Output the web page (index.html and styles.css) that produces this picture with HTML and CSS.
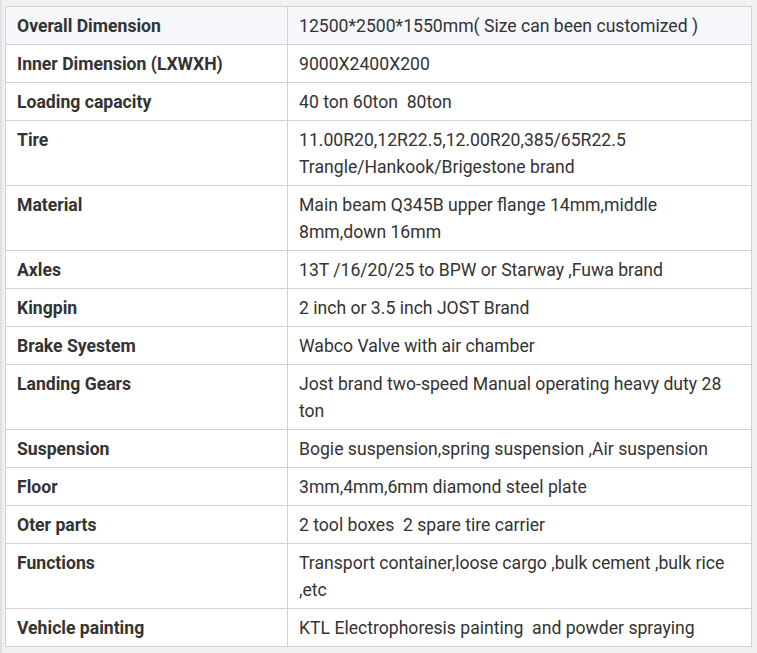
FILE: index.html
```html
<!DOCTYPE html>
<html>
<head>
<meta charset="utf-8">
<link rel="stylesheet" href="styles.css">
</head>
<body>
<div class="wrap">
<table class="spec">
<tbody>
<tr class="first"><td class="k">Overall Dimension</td><td class="v">12500*2500*1550mm( Size can been customized )</td></tr>
<tr><td class="k">Inner Dimension (LXWXH)</td><td class="v">9000X2400X200</td></tr>
<tr><td class="k">Loading capacity</td><td class="v">40 ton 60ton&nbsp; 80ton</td></tr>
<tr><td class="k">Tire</td><td class="v">11.00R20,12R22.5,12.00R20,385/65R22.5<br>Trangle/Hankook/Brigestone brand</td></tr>
<tr><td class="k">Material</td><td class="v">Main beam Q345B upper flange 14mm,middle 8mm,down 16mm</td></tr>
<tr><td class="k">Axles</td><td class="v">13T /16/20/25 to BPW or Starway ,Fuwa brand</td></tr>
<tr><td class="k">Kingpin</td><td class="v">2 inch or 3.5 inch JOST Brand</td></tr>
<tr><td class="k">Brake Syestem</td><td class="v">Wabco Valve with air chamber</td></tr>
<tr><td class="k">Landing Gears</td><td class="v">Jost brand two-speed Manual operating heavy duty 28 ton</td></tr>
<tr><td class="k">Suspension</td><td class="v">Bogie suspension,spring suspension ,Air suspension</td></tr>
<tr><td class="k">Floor</td><td class="v">3mm,4mm,6mm diamond steel plate</td></tr>
<tr><td class="k">Oter parts</td><td class="v">2 tool boxes&nbsp; 2 spare tire carrier</td></tr>
<tr><td class="k">Functions</td><td class="v">Transport container,loose cargo ,bulk cement ,bulk rice ,etc</td></tr>
<tr><td class="k">Vehicle painting</td><td class="v">KTL Electrophoresis painting&nbsp; and powder spraying</td></tr>
</tbody>
</table>
</div>
</body>
</html>
```
FILE: styles.css
```css
html, body {
  margin: 0;
  padding: 0;
  background: #f1f1f2;
}
body {
  font-family: Roboto, "Liberation Sans", sans-serif;
  color: #333;
  border-left: 2px solid #dfe0e3;
  min-height: 653px;
  box-sizing: border-box;
}
.wrap {
  padding: 6px 5px 0 3px;
}
.spec {
  border-collapse: collapse;
  width: 747px;
  table-layout: fixed;
  background: #fff;
  font-size: 17.6px;
}
.spec td {
  border: 1px solid #d2d2d2;
  padding: 6px 11px 4px 11px;
  line-height: 27px;
  vertical-align: top;
  text-align: left;
}
.spec td.k {
  width: 259px;
  font-weight: 700;
}
.spec td.v {
  padding-right: 22px;
}
.spec tr.first td {
  background: #f5f7fa;
}
```
